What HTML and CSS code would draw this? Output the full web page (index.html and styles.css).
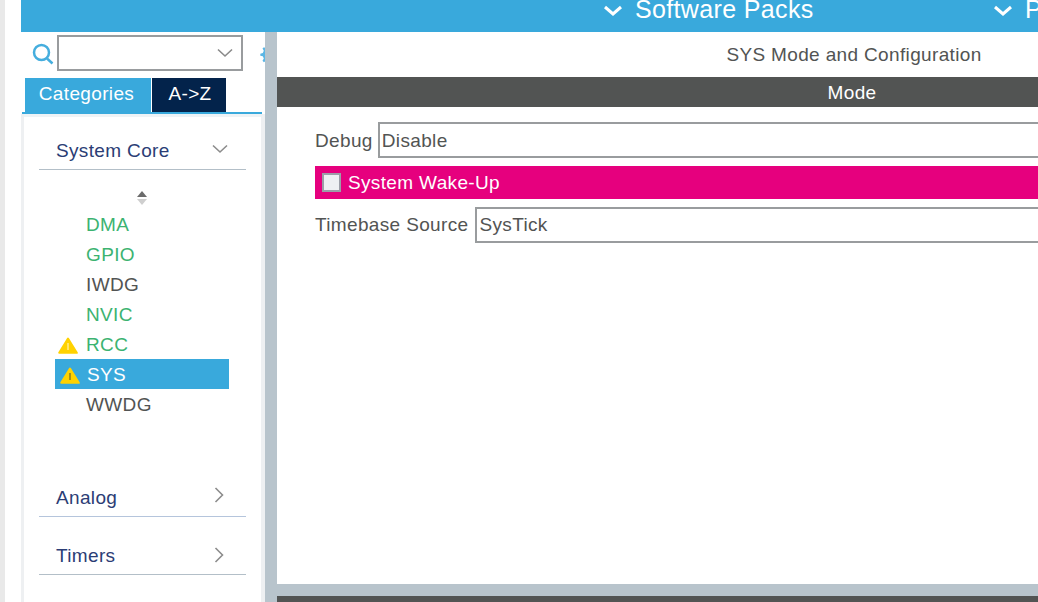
FILE: index.html
```html
<!DOCTYPE html>
<html lang="en">
<head>
<meta charset="utf-8">
<title>SYS Mode and Configuration</title>
<link rel="stylesheet" href="styles.css">
</head>
<body>
<div class="gutter"></div>
<div class="app">
  <header class="topbar">
    <div class="top-item top-packs">
      <svg class="top-chev" viewBox="0 0 20 12"><path d="M2 2l8 7 8-7"/></svg>
      <span>Software Packs</span>
    </div>
    <div class="top-item top-pinout">
      <svg class="top-chev" viewBox="0 0 20 12"><path d="M2 2l8 7 8-7"/></svg>
      <span>Pinout</span>
    </div>
  </header>
  <div class="workspace">
    <aside class="sidebar">
      <div class="search-row">
        <svg class="search-icon" viewBox="0 0 22 22"><circle cx="9.500" cy="9.500" r="7.500"/><path d="M15 15.500l5.500 5"/></svg>
        <div class="search-box">
          <svg class="chev-small" viewBox="0 0 16 10"><path d="M1 1.500l7 6.500 7-6.500"/></svg>
        </div>
        <svg class="gear-icon" viewBox="0 0 20 20"><path d="M10 2l2 0 .6 2.500 2.300 1 2.200-1.300 1.400 1.400-1.300 2.200 1 2.300 2.500.6v2l-2.500.6-1 2.300 1.300 2.200-1.400 1.400-2.200-1.300-2.300 1-.6 2.500h-2l-.6-2.500-2.300-1-2.200 1.300-1.400-1.400 1.300-2.200-1-2.300-2.500-.6v-2l2.500-.6 1-2.300-1.300-2.200 1.400-1.400 2.200 1.300 2.300-1z"/><circle cx="11" cy="11" r="3"/></svg>
      </div>
      <div class="tabs">
        <div class="tab tab-active">Categories</div>
        <div class="tab tab-dark">A-&gt;Z</div>
      </div>
      <div class="tab-rule"></div>
      <div class="panel">
        <div class="group group-core">
          <span>System Core</span>
          <svg class="chev-down" viewBox="0 0 16 10"><path d="M1 1.500l7 6.500 7-6.500"/></svg>
        </div>
        <div class="sort">
          <span class="sort-up"></span>
          <span class="sort-down"></span>
        </div>
        <ul class="items">
          <li class="item ok">DMA</li>
          <li class="item ok">GPIO</li>
          <li class="item">IWDG</li>
          <li class="item ok">NVIC</li>
          <li class="item ok">
            <svg class="warn" viewBox="0 0 20 17"><path class="warn-fill" d="M10 1.500L18.800 15.800H1.200z"/><path class="warn-mark-light" d="M10 6v7"/></svg>RCC
          </li>
          <li class="item selected">
            <svg class="warn" viewBox="0 0 20 17"><path class="warn-fill" d="M10 1.500L18.800 15.800H1.200z"/><path class="warn-mark" d="M10 6v7"/></svg>SYS
          </li>
          <li class="item">WWDG</li>
        </ul>
        <div class="group group-analog">
          <span>Analog</span>
          <svg class="chev-right chev-analog" viewBox="0 0 10 16"><path d="M1.500 1l7 7-7 7"/></svg>
        </div>
        <div class="group group-timers">
          <span>Timers</span>
          <svg class="chev-right chev-timers" viewBox="0 0 10 16"><path d="M1.500 1l7 7-7 7"/></svg>
        </div>
      </div>
    </aside>
    <main class="main">
      <div class="config">
        <h1 class="title">SYS Mode and Configuration</h1>
        <div class="mode-head">Mode</div>
        <div class="form">
          <div class="field field-debug">
            <label class="field-label">Debug</label>
            <div class="select">Disable</div>
          </div>
          <div class="wake">
            <span class="check"></span>
            <span>System Wake-Up</span>
          </div>
          <div class="field field-timebase">
            <label class="field-label">Timebase Source</label>
            <div class="select">SysTick</div>
          </div>
        </div>
      </div>
      <div class="lower-head"></div>
    </main>
  </div>
</div>
</body>
</html>
```
FILE: styles.css
```css
* { box-sizing: border-box; }
html, body { margin: 0; padding: 0; height: 100%; overflow: hidden; }
body {
  display: flex;
  width: 1038px;
  height: 602px;
  background: #fff;
  font-family: "Liberation Sans", Arial, sans-serif;
  font-size: 19px;
  color: #525453;
  letter-spacing: 0.35px;
}
.gutter {
  width: 21px;
  flex: none;
  background: #fff;
  border-left: 5px solid #e9e9e9;
}
.app { flex: 1; min-width: 0; display: flex; flex-direction: column; }
.topbar {
  height: 32px;
  flex: none;
  background: #39a9dc;
  color: #fff;
  display: flex;
  padding-left: 582px;
  font-size: 25px;
  overflow: hidden;
  white-space: nowrap;
}
.top-item { display: flex; align-items: center; height: 19px; gap: 12px; flex: none; }
.top-packs { width: 390px; }
.top-chev { width: 20px; height: 12px; margin-top: 3px; fill: none; stroke: #fff; stroke-width: 3; flex: none; }
.workspace { flex: 1; display: flex; min-height: 0; }
.sidebar { width: 244px; flex: none; display: flex; flex-direction: column; overflow: hidden; }
.search-row { height: 46px; flex: none; display: flex; align-items: flex-start; padding: 3px 0 0 11px; }
.search-icon { width: 22px; height: 22px; margin-top: 8px; fill: none; stroke: #45aede; stroke-width: 2.500; flex: none; }
.search-box {
  width: 186px;
  height: 36px;
  margin-left: 3px;
  border: 2px solid #999c9e;
  background: #fff;
  flex: none;
  display: flex;
  align-items: center;
  justify-content: flex-end;
  padding-right: 8px;
}
.chev-small { width: 16px; height: 10px; fill: none; stroke: #8a8a8a; stroke-width: 1.600; }
.gear-icon { width: 20px; height: 20px; margin: 8px 0 0 16px; fill: #5cb6e4; flex: none; }
.gear-icon circle { fill: #fff; }
.tabs { display: flex; height: 34px; flex: none; padding-left: 4px; gap: 1px; }
.tab { height: 34px; display: flex; align-items: center; justify-content: center; color: #fff; padding-bottom: 2px; }
.tab-active { width: 126px; background: #39a9dc; padding-right: 3px; }
.tab-dark { width: 74px; background: #03234b; padding-left: 2px; }
.tab-rule { height: 2px; width: 240px; margin-left: 1px; background: #39a9dc; flex: none; }
.panel {
  flex: 1;
  border-left: 3px solid #eef0f2;
  border-right: 4px solid #eef0f2;
  box-shadow: inset 0 3px 0 #eef3f6;
  background: #fff;
  padding: 0 0 0 15px;
}
.group {
  width: 207px;
  display: flex;
  justify-content: space-between;
  align-items: center;
  padding: 0 22px 0 17px;
  color: #2b3d75;
  border-bottom: 1px solid #b3bfc8;
}
.group-core { height: 56px; padding-top: 19px; padding-right: 18px; }
.group-analog { height: 38px; border-bottom-color: #b5c5dc; }
.group-timers { height: 58px; padding-top: 21px; }
.chev-down { width: 16px; height: 10px; fill: none; stroke: #8c8c8c; stroke-width: 1.600; margin-top: -4px; }
.chev-right { width: 10px; height: 16px; fill: none; stroke: #8c8c8c; stroke-width: 1.600; }
.chev-analog { margin-top: -5px; }
.chev-timers { margin-top: -2px; }
.sort { height: 19px; display: flex; flex-direction: column; align-items: center; justify-content: center; gap: 2px; width: 206px; margin-top: 18px; }
.sort-up { width: 0; height: 0; border: 5px solid transparent; border-top-width: 0; border-bottom: 6px solid #6b6b6b; }
.sort-down { width: 0; height: 0; border: 5px solid transparent; border-bottom-width: 0; border-top: 6px solid #cfcfcf; }
.items { list-style: none; margin: 2px 0 0; padding: 0; height: 270px; }
.item { height: 30px; width: 174px; margin-left: 16px; padding-left: 31px; padding-top: 2px; display: flex; align-items: center; position: relative; }
.ok { color: #3cb371; }
.selected { background: #39a9dc; color: #fff; padding-left: 32px; }
.warn { position: absolute; left: 3px; top: 8px; width: 20px; height: 17px; }
.selected .warn { left: 5px; }
.warn-fill { fill: #ffd200; stroke: #ffd200; stroke-width: 2; stroke-linejoin: round; }
.warn-mark { stroke: #8a7a20; stroke-width: 1.500; fill: none; }
.warn-mark-light { stroke: #fff3b0; stroke-width: 1.200; fill: none; }
.main { flex: 1; min-width: 0; display: flex; flex-direction: column; background: #b8c4cc; padding-left: 12px; overflow: hidden; }
.config { height: 552px; width: 1154px; flex: none; background: #fff; }
.title {
  margin: 0;
  height: 45px;
  font-weight: normal;
  font-size: 19px;
  text-align: center;
  padding-top: 12px;
  line-height: 21px;
  white-space: nowrap;
}
.mode-head { height: 30px; background: #525453; color: #fff; text-align: center; line-height: 32px; padding-right: 4px; }
.form { padding: 15px 0 0 38px; width: 799px; display: flex; flex-direction: column; }
.field { display: flex; align-items: center; height: 36px; gap: 6px; }
.field-label { white-space: nowrap; }
.field-debug { gap: 5px; }
.field-debug .field-label { margin-top: 2px; }
.select { flex: 1; height: 36px; border: 2px solid #999c9e; border-right: 0; padding-left: 2px; line-height: 32px; }
.field-debug .select { line-height: 34px; }
.wake { height: 33px; margin-top: 8px; background: #e6007e; color: #fff; display: flex; align-items: center; padding-left: 7px; gap: 7px; }
.check { width: 19px; height: 19px; border: 2px solid #9c9ea8; background: #eef0f3; flex: none; }
.field-timebase { margin-top: 8px; gap: 7px; }
.lower-head { height: 6px; margin-top: 12px; background: #525453; flex: none; }
```
